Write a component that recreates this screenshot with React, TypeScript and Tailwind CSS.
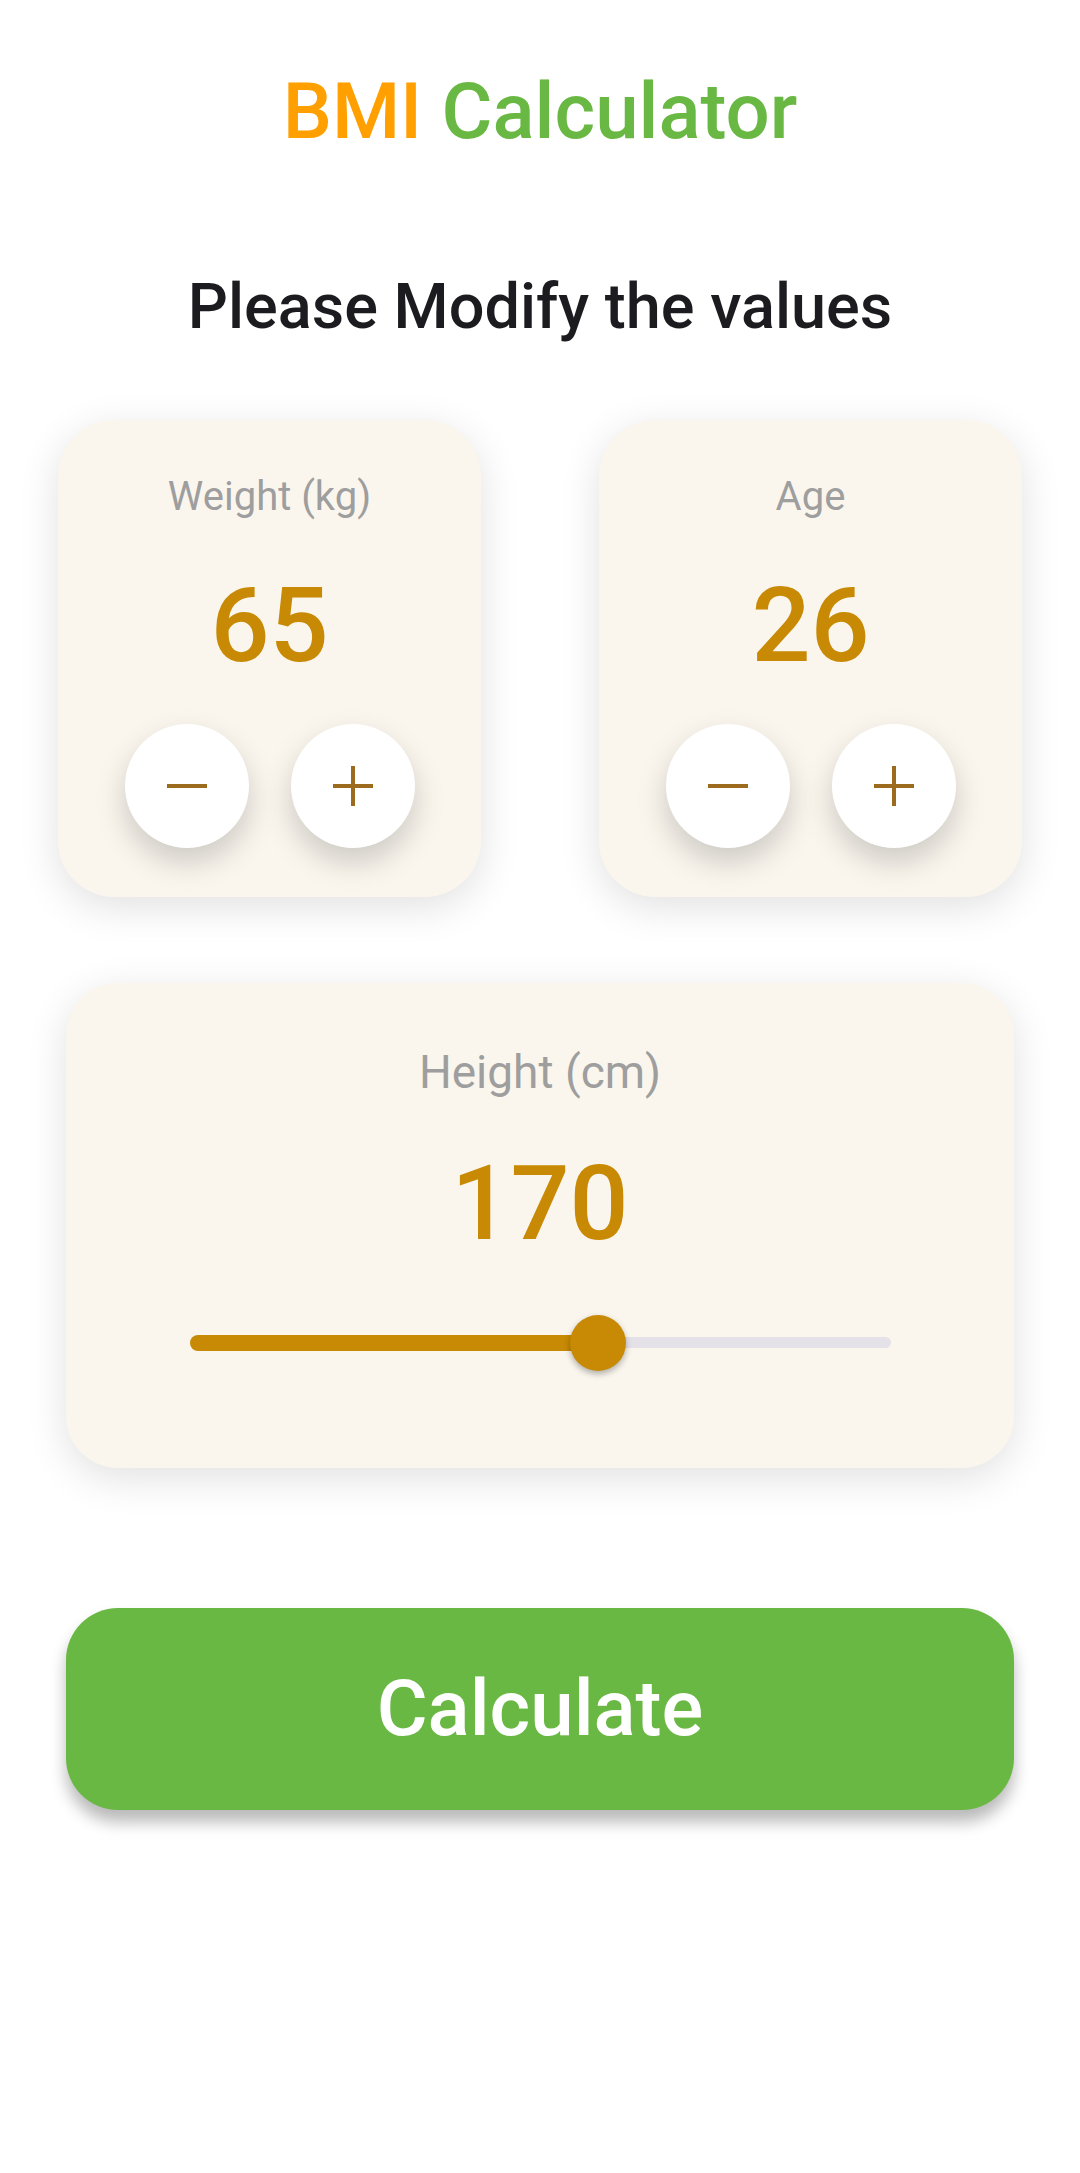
import React, { useState } from "react";

const GOLD = "text-[#c88a04]";

function Stepper({
    label,
    value,
    onChange,
}: {
    label: string;
    value: number;
    onChange: (v: number) => void;
}) {
    return (
        <div className="flex flex-col items-center rounded-[56px] bg-[#faf6ee] pt-[57px] pb-[49px] shadow-[0_10px_40px_rgba(0,0,0,0.12)]">
            <div className="text-[40px] leading-none text-[#9e9e9e]">{label}</div>
            <div className={`mt-[57px] text-[104px] font-medium leading-none ${GOLD}`}>
                {value}
            </div>
            <div className="mt-[46px] flex gap-[42px]">
                <button
                    onClick={() => onChange(value - 1)}
                    className="flex h-[124px] w-[124px] items-center justify-center rounded-full bg-white shadow-[0_14px_30px_rgba(0,0,0,0.18)]"
                >
                    <svg width="40" height="40" viewBox="0 0 40 40">
                        <rect x="0" y="18" width="40" height="4" fill="#9c6b1e" />
                    </svg>
                </button>
                <button
                    onClick={() => onChange(value + 1)}
                    className="flex h-[124px] w-[124px] items-center justify-center rounded-full bg-white shadow-[0_14px_30px_rgba(0,0,0,0.18)]"
                >
                    <svg width="40" height="40" viewBox="0 0 40 40">
                        <rect x="0" y="18" width="40" height="4" fill="#9c6b1e" />
                        <rect x="18" y="0" width="4" height="40" fill="#9c6b1e" />
                    </svg>
                </button>
            </div>
        </div>
    );
}

export default function App() {
    const [weight, setWeight] = useState(65);
    const [age, setAge] = useState(26);
    const [height] = useState(170);

    // slider range 100..220
    const pct = ((height - 100) / 120) * 100;

    return (
        <div
            className="min-h-[2173px] w-[1080px] bg-white"
            style={{ fontFamily: "Roboto, 'Noto Sans', sans-serif" }}
        >
            <h1 className="pt-[73px] text-center text-[78px] font-medium leading-none">
                <span className="text-[#ffa000]">BMI</span>{" "}
                <span className="text-[#6ab844]">Calculator</span>
            </h1>

            <h2 className="mt-[124px] text-center text-[63px] font-medium leading-none text-[#1c1b1f]">
                Please Modify the values
            </h2>

            <div className="mt-[82px] grid grid-cols-2 gap-[118px] px-[58px]">
                <Stepper label="Weight (kg)" value={weight} onChange={setWeight} />
                <Stepper label="Age" value={age} onChange={setAge} />
            </div>

            <div className="mx-[66px] mt-[86px] flex flex-col items-center rounded-[52px] bg-[#faf6ee] pt-[66px] pb-[97px] shadow-[0_10px_40px_rgba(0,0,0,0.12)]">
                <div className="text-[46px] leading-none text-[#9e9e9e]">Height (cm)</div>
                <div className={`mt-[57px] text-[104px] font-medium leading-none ${GOLD}`}>
                    {height}
                </div>
                <div className="relative mt-[59px] h-[56px] w-[701px]">
                    <div className="absolute left-0 right-0 top-[22px] h-[11px] rounded-full bg-[#e5e1e8]" />
                    <div
                        className="absolute left-0 top-[20px] h-[16px] rounded-full bg-[#c88a04]"
                        style={{ width: `${pct}%` }}
                    />
                    <div
                        className="absolute top-0 h-[56px] w-[56px] -translate-x-1/2 rounded-full bg-[#c88a04] shadow-[0_3px_6px_rgba(0,0,0,0.3)]"
                        style={{ left: `${pct}%` }}
                    />
                </div>
            </div>

            <div className="mx-[66px] mt-[140px]">
                <button className="flex h-[202px] w-full items-center justify-center rounded-[52px] bg-[#6ab844] text-[78px] font-medium leading-none text-white shadow-[0_12px_16px_rgba(0,0,0,0.28)]">
                    Calculate
                </button>
            </div>
        </div>
    );
}
